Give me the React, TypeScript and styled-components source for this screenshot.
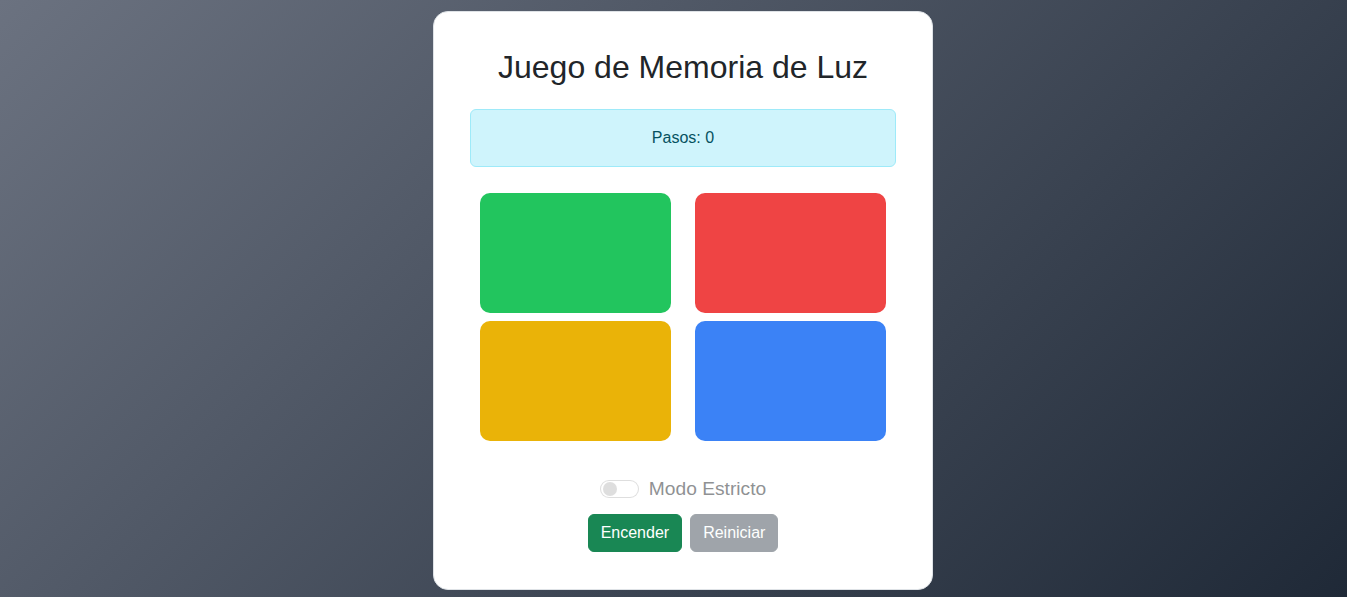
import React, { useState } from "react";
import styled, { createGlobalStyle } from "styled-components";

const GlobalStyle = createGlobalStyle`
  html, body { margin: 0; padding: 0; }
  body {
    font-family: "Liberation Sans", Arial, sans-serif;
    color: #212529;
    background: linear-gradient(135deg, #6b7280 0%, #1f2937 100%);
    min-height: 100vh;
  }
  * { box-sizing: border-box; }
`;

const Page = styled.div`
  min-height: 100vh;
  display: flex;
  justify-content: center;
  align-items: flex-start;
  padding: 11px 0 0 19px;
`;

const Card = styled.div`
  width: 500px;
  background: #ffffff;
  border: 1px solid #dee2e6;
  border-radius: 15px;
  padding: 36px 36px 37px;
  display: flex;
  flex-direction: column;
  align-items: stretch;
`;

const Title = styled.h1`
  margin: 0 0 23px;
  font-size: 32px;
  font-weight: 400;
  line-height: 1.2;
  text-align: center;
  color: #212529;
`;

const Status = styled.div`
  background: #cff4fc;
  border: 1px solid #9eeaf9;
  color: #055160;
  border-radius: 6px;
  padding: 16px;
  font-size: 16px;
  line-height: 24px;
  text-align: center;
  margin-bottom: 16px;
`;

const Board = styled.div`
  display: grid;
  grid-template-columns: 1fr 1fr;
  column-gap: 24px;
  row-gap: 8px;
  padding: 10px;
`;

const Pad = styled.button<{ $color: string }>`
  height: 120px;
  border: none;
  border-radius: 10px;
  background: ${(p) => p.$color};
  padding: 0;
  cursor: pointer;
`;

const SwitchRow = styled.label`
  display: flex;
  align-items: center;
  justify-content: center;
  gap: 10px;
  margin-top: 23px;
  font-size: 19.2px;
  line-height: 30px;
  color: #212529;
  opacity: 0.5;
`;

const SwitchTrack = styled.span`
  width: 39px;
  height: 18px;
  border: 1px solid rgba(0, 0, 0, 0.25);
  border-radius: 10px;
  background: #fff;
  display: flex;
  align-items: center;
  padding-left: 2px;
`;

const SwitchKnob = styled.span`
  width: 14px;
  height: 14px;
  border-radius: 50%;
  background: rgba(0, 0, 0, 0.25);
`;

const Actions = styled.div`
  display: flex;
  justify-content: center;
  gap: 8px;
  margin-top: 10px;
`;

const Btn = styled.button<{ $variant: "success" | "secondary" }>`
  font-family: "Liberation Sans", Arial, sans-serif;
  font-size: 16px;
  line-height: 24px;
  padding: 6px 12px;
  border-radius: 6px;
  border: 1px solid ${(p) => (p.$variant === "success" ? "#198754" : "#6c757d")};
  background: ${(p) => (p.$variant === "success" ? "#198754" : "#6c757d")};
  color: #fff;
  opacity: ${(p) => (p.$variant === "secondary" ? 0.65 : 1)};
  cursor: pointer;
`;

export default function App() {
  const [steps] = useState(0);
  const colors = ["#22c55e", "#ef4444", "#eab308", "#3b82f6"];
  return (
    <>
      <GlobalStyle />
      <Page>
        <Card>
          <Title>Juego de Memoria de Luz</Title>
          <Status>Pasos: {steps}</Status>
          <Board>
            {colors.map((c) => (
              <Pad key={c} $color={c} />
            ))}
          </Board>
          <SwitchRow>
            <SwitchTrack>
              <SwitchKnob />
            </SwitchTrack>
            Modo Estricto
          </SwitchRow>
          <Actions>
            <Btn $variant="success">Encender</Btn>
            <Btn $variant="secondary" disabled>
              Reiniciar
            </Btn>
          </Actions>
        </Card>
      </Page>
    </>
  );
}
